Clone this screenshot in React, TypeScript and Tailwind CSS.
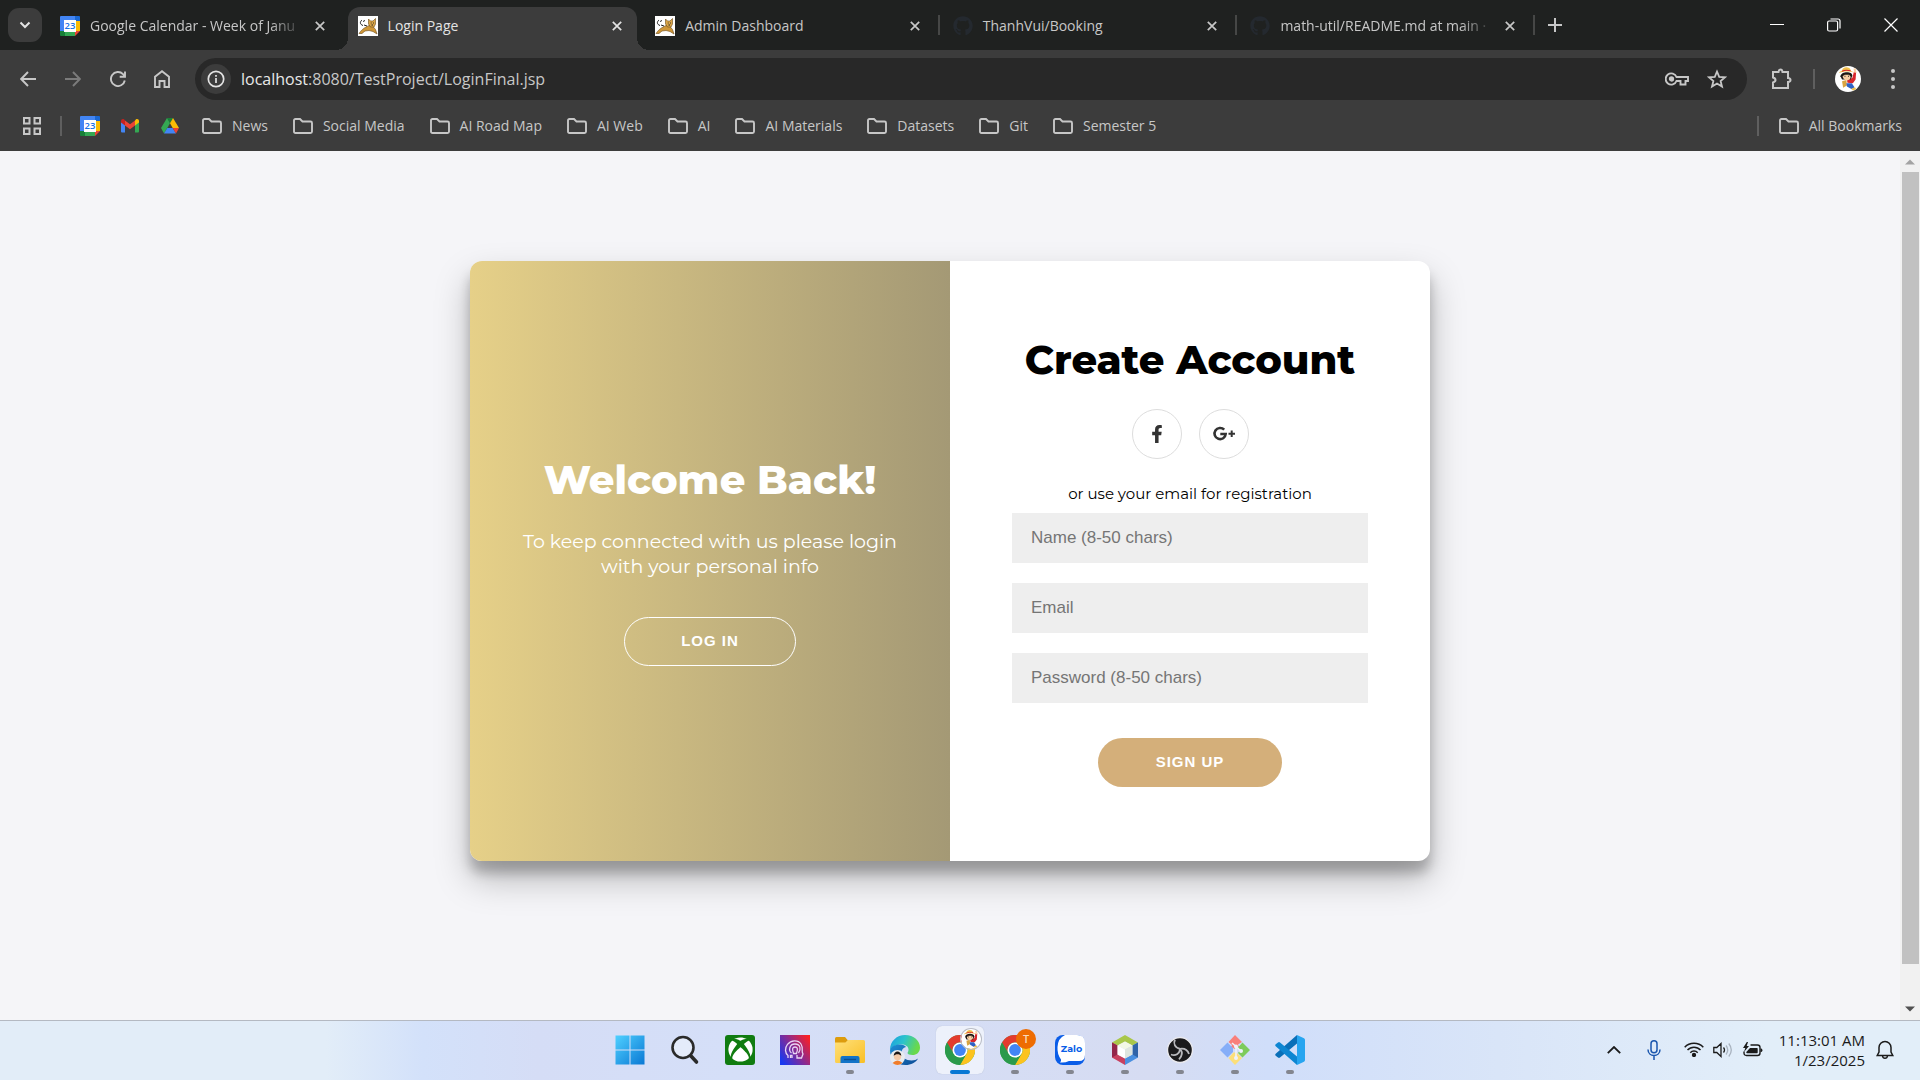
import React from 'react';
import { FaFacebookF, FaGithub, FaXbox } from 'react-icons/fa';

const ui = "font-['Segoe_UI','Open_Sans',sans-serif]";
const brand = "font-['Montserrat','Inter',sans-serif]";

function CalendarIcon() {
  return (
    <svg viewBox="0 0 20 20" className="size-5 shrink-0">
      <path d="M0 1a1 1 0 0 1 1-1h14v5H5v10H0z" fill="#4285f4" />
      <path d="M15 0h4a1 1 0 0 1 1 1v4h-5z" fill="#1967d2" />
      <path d="M15 5h5v10h-5z" fill="#fbbc04" />
      <path d="M5 15h10v5H5z" fill="#34a853" />
      <path d="M0 15h5v5H1a1 1 0 0 1-1-1z" fill="#188038" />
      <path d="M15 15h5l-5 5z" fill="#ea4335" />
      <path d="M4 4h12v12H4z" fill="#fff" />
      <text x="10" y="13.4" fontSize="9.5" fontWeight="600" textAnchor="middle" fill="#1a73e8" fontFamily="Open Sans">23</text>
    </svg>
  );
}

function TomcatIcon() {
  return (
    <svg viewBox="0 0 20 20" className="size-5 shrink-0">
      <path d="M0 0h20v20H0z" fill="#fff" />
      <path d="M1 17.500c2-3 4-5 8-7l2-1 4 1 2.500 3 1.500 4.500-4-2.500-4-1-4 .5-3 2.500z" fill="#cf9738" stroke="#6b4a18" strokeWidth=".6" />
      <path d="M10.500 3l2 2h2.500l2.500-2.500v5.500l-1.500 3h-3.500l-2-3z" fill="#d9a548" stroke="#6b4a18" strokeWidth=".6" />
      <path d="M4 4C1.500 6 2 8.500 5 9.500M5 5.500l2-1M6 9l3 1M12.800 7h.8M15.200 7h.8M13.500 9h1.500" fill="none" stroke="#222" strokeWidth="1" />
    </svg>
  );
}

function GmailIcon() {
  return (
    <svg viewBox="0 0 20 20" className="size-5 shrink-0">
      <path d="M1 5v10.500a1 1 0 0 0 1 1h3V8z" fill="#4285f4" />
      <path d="M19 5v10.500a1 1 0 0 1-1 1h-3V8z" fill="#34a853" />
      <path d="M15 4.500v5l4-3V5c0-1.900-2-2.500-3.200-1.500z" fill="#fbbc04" />
      <path d="M5 4.500l5 3.700 5-3.700v5l-5 3.700-5-3.700z" fill="#ea4335" />
      <path d="M1 5v1.500l4 3v-5l-.8-1C3 2.500 1 3.100 1 5z" fill="#c5221f" />
    </svg>
  );
}

function DriveIcon() {
  return (
    <svg viewBox="0 0 20 20" className="size-5 shrink-0">
      <path d="M7 2h6l-3 5.200z" fill="#188038" />
      <path d="M13 2l6 10h-6.300L10 7.200z" fill="#fbbc04" />
      <path d="M7 2l3 5.200-2.700 4.800L4 17.500 1 12z" fill="#34a853" />
      <path d="M7.300 12H12.700L16 17.500H4z" fill="#4285f4" />
      <path d="M12.700 12H19l-3 5.500z" fill="#ea4335" />
    </svg>
  );
}

function FolderIcon() {
  return (
    <svg viewBox="0 0 20 16" className="h-4 w-5 shrink-0" fill="none" stroke="#c7c7c7" strokeWidth="1.9">
      <path d="M1 13V2.500Q1 1 2.500 1H7l2.500 2.500h8Q19 3.500 19 5v8.500q0 1.500-1.500 1.500h-15Q1 15 1 13.500z" />
    </svg>
  );
}

function CloseIcon({ className }: { className: string }) {
  return (
    <svg viewBox="0 0 10 10" className={className} stroke="currentColor" strokeWidth="1.7">
      <path d="M.8.8l8.400 8.400M9.200.8L.8 9.200" />
    </svg>
  );
}

function Avatar({ className }: { className: string }) {
  return (
    <svg viewBox="0 0 24 24" className={className}>
      <circle cx="12" cy="12" r="12" fill="#fff" />
      <path d="M11 12.500l5-1.500 1.500-6 2 .5-.5 7-2.500 3.500-5-.5z" fill="#d8262c" />
      <path d="M17 2.500l2-.5.8 4-1.800.5z" fill="#f8cfa4" />
      <path d="M6.500 14l4-1 .5 5-3.500 2z" fill="#d9a441" />
      <path d="M10.500 16l5 0 2.500 3.500-2.500 2-4.500-2.500z" fill="#2f62c4" />
      <path d="M15 21l3.500-1.500 1 2-3 1z" fill="#eec04f" />
      <path d="M5 9.500C5 5 16 4 16 9l-1.500 3.500h-8z" fill="#1d1815" />
      <path d="M7 9.500l2-1.500 4 0 1.500 2c0 4.500-7 4.500-7.500-.5z" fill="#f8cfa4" />
      <path d="M8.800 9.500h.8M12 9.500h.8" stroke="#111" strokeWidth="1" />
      <path d="M3.500 6.500C5 3 15 2.500 17 6c-3-1.500-10-1.200-13.500.5z" fill="#f1c24c" />
      <path d="M6.500 4.500c0-4.500 7.500-4.500 8-.5z" fill="#f1c24c" />
      <path d="M6.500 4.800c2-1 5.500-1 8-.4" stroke="#d8262c" strokeWidth="1" fill="none" />
    </svg>
  );
}

const tabs = [
  { title: 'Google Calendar - Week of Janu', icon: <CalendarIcon />, active: false, divider: false, faded: true },
  { title: 'Login Page', icon: <TomcatIcon />, active: true, divider: false, faded: false },
  { title: 'Admin Dashboard', icon: <TomcatIcon />, active: false, divider: true, faded: false },
  { title: 'ThanhVui/Booking', icon: <FaGithub className="size-5 shrink-0 text-[#24292f]" />, active: false, divider: true, faded: false },
  { title: 'math-util/README.md at main ·', icon: <FaGithub className="size-5 shrink-0 text-[#24292f]" />, active: false, divider: true, faded: true },
];

function TabStrip() {
  return (
    <div className="flex h-[50px] items-center bg-[#1f2120] pl-2 pr-px text-[#c7c7c7]">
      <button aria-label="Search tabs" className="flex h-[34px] w-[34px] shrink-0 items-center justify-center rounded-[11px] bg-[#3c3c3c]">
        <svg viewBox="0 0 12 8" className="h-2 w-3" fill="none" stroke="#e3e3e3" strokeWidth="2"><path d="M1.500 1.500L6 6l4.500-4.500" /></svg>
      </button>
      <div className="ml-2 grid h-full min-w-0 max-w-[1488px] flex-1 grid-cols-5 items-end" role="tablist">
        {tabs.map((t) => (
          <div
            key={t.title}
            className={
              t.active
                ? 'relative mr-2 flex h-[43px] min-w-0 items-center rounded-t-xl bg-[#3c3c3c] pb-1.5 pl-2.5 pr-[14px] text-[#e3e3e3]'
                : 'relative flex h-[43px] min-w-0 items-center pb-1.5 pl-2.5 pr-[22px]'
            }
          >
            {t.active && (
              <>
                <span className="absolute -left-3 bottom-0 size-3 bg-[radial-gradient(circle_at_0_0,#1f2120_12px,#3c3c3c_12px)]" />
                <span className="absolute -right-3 bottom-0 size-3 bg-[radial-gradient(circle_at_100%_0,#1f2120_12px,#3c3c3c_12px)]" />
              </>
            )}
            <button role="tab" aria-selected={t.active} className="flex min-w-0 flex-1 items-center gap-2.5 text-left">
              {t.icon}
              <span className={t.faded ? 'flex-1 whitespace-nowrap text-[14px] leading-5 [mask-image:linear-gradient(to_right,#000_84%,transparent)]' : 'flex-1 whitespace-nowrap text-[14px] leading-5'}>{t.title}</span>
            </button>
            <button aria-label="Close tab" className="ml-2.5 flex size-3 shrink-0 items-center justify-center"><CloseIcon className="size-[10px]" /></button>
            {t.divider && <span className="absolute right-[3px] top-2 h-5 w-0.5 bg-[#464746]" />}
          </div>
        ))}
      </div>
      <button aria-label="New tab" className="ml-2.5 shrink-0">
        <svg viewBox="0 0 14 14" className="size-3.5" stroke="currentColor" strokeWidth="2"><path d="M7 0v14M0 7h14" /></svg>
      </button>
      <div className="ml-auto flex shrink-0 text-white">
        <button aria-label="Minimize" className="flex w-[57px] items-center justify-center"><svg viewBox="0 0 14 14" className="size-3.5" stroke="currentColor"><path d="M0 6.500h14" /></svg></button>
        <button aria-label="Restore" className="flex w-[57px] items-center justify-center"><svg viewBox="0 0 14 14" className="size-3.5" fill="none" stroke="currentColor" strokeWidth="1.200"><rect x=".6" y="3" width="10" height="10" rx="1.500" /><path d="M3.500 1H11q2 0 2 2v7.500" /></svg></button>
        <button aria-label="Close" className="flex w-[57px] items-center justify-center"><svg viewBox="0 0 14 14" className="size-3.5" stroke="currentColor" strokeWidth="1.200"><path d="M.5.500l13 13M13.500.5l-13 13" /></svg></button>
      </div>
    </div>
  );
}

function Toolbar() {
  return (
    <div className="flex h-[58px] items-center bg-[#3c3c3c] pl-5 pr-[25px] text-[#c7c7c7]">
      <button aria-label="Back" className="w-[45px]">
        <svg viewBox="0 0 16 16" className="size-4" fill="none" stroke="currentColor" strokeWidth="1.900"><path d="M16 8H1.500M8 1L1.200 8 8 15" /></svg>
      </button>
      <button aria-label="Forward" className="w-[45px]">
        <svg viewBox="0 0 16 16" className="size-4" fill="none" stroke="#7b7b7b" strokeWidth="1.900"><path d="M0 8h14.500M8 1l6.800 7L8 15" /></svg>
      </button>
      <button aria-label="Reload" className="w-[44px]">
        <svg viewBox="0 0 16 16" className="size-4" fill="none" stroke="currentColor" strokeWidth="1.900"><path d="M14.800 9.500A7 7 0 1 1 13 3.200L15 5.500M15 .5v5.300H9.700" /></svg>
      </button>
      <button aria-label="Home" className="w-[41px]">
        <svg viewBox="0 0 16 18" className="h-[18px] w-4" fill="none" stroke="currentColor" strokeWidth="1.900"><path d="M1 17V6.800L8 1.200l7 5.600V17h-4.500v-6h-5v6z" /></svg>
      </button>
      <div className="flex h-[42px] min-w-0 flex-1 items-center rounded-full bg-[#282828] pl-1.5 pr-5">
        <button aria-label="Site information" className="flex size-[30px] shrink-0 items-center justify-center rounded-full bg-[#3c3c3c]">
          <svg viewBox="0 0 18 18" className="size-[18px]" fill="none" stroke="#e3e3e3" strokeWidth="1.700"><circle cx="9" cy="9" r="7.700" /><path d="M9 8v5M9 5v1.700" /></svg>
        </button>
        <a href="#address" className="ml-2.5 flex-1 whitespace-nowrap text-[16px] leading-6"><span className="text-[#e8e8e8]">localhost</span>:8080/TestProject/LoginFinal.jsp</a>
        <button aria-label="Passwords">
          <svg viewBox="0 0 24 14" className="h-3.5 w-6" fill="none" stroke="currentColor" strokeWidth="1.900"><path d="M11.500 5A5.600 5.600 0 1 0 11.500 9h4v3.500h5V9H23V5z" /><circle cx="6.500" cy="7" r="1.700" fill="currentColor" /></svg>
        </button>
        <button aria-label="Bookmark this tab" className="ml-[18px]">
          <svg viewBox="0 0 20 20" className="size-5" fill="none" stroke="currentColor" strokeWidth="1.800"><path d="M10 2.500l2.200 5.300 5.800.5-4.400 3.700 1.400 5.600-5-3-5 3L6.400 12 2 8.300l5.800-.5z" /></svg>
        </button>
      </div>
      <button aria-label="Extensions" className="ml-6">
        <svg viewBox="0 0 22 22" className="size-[22px]" fill="none" stroke="currentColor" strokeWidth="2"><path d="M2 4h5.500q.3-2.500 2-2.500T11.500 4H17v6q2.500.3 2.500 2T17 14v6H2v-5.500q2.500-.8 2.500-2.500T2 9.500z" /></svg>
      </button>
      <span className="ml-5 h-5 w-0.5 bg-[#5f5f5f]" />
      <button aria-label="Profile" className="ml-5"><Avatar className="size-[26px]" /></button>
      <button aria-label="Menu" className="ml-[30px] flex flex-col gap-1">
        <span className="size-1 rounded-full bg-[#c7c7c7]" /><span className="size-1 rounded-full bg-[#c7c7c7]" /><span className="size-1 rounded-full bg-[#c7c7c7]" />
      </button>
    </div>
  );
}

const bookmarks = ['News', 'Social Media', 'AI Road Map', 'AI Web', 'AI', 'AI Materials', 'Datasets', 'Git', 'Semester 5'];

function BookmarkBar() {
  return (
    <nav className="flex h-[43px] items-start bg-[#3c3c3c] pl-[22px] pr-[18px] pt-2 text-[#c7c7c7]">
      <div className="flex h-5 w-full items-center">
        <button aria-label="Apps">
          <svg viewBox="0 0 20 20" className="size-5" fill="none" stroke="currentColor" strokeWidth="2"><path d="M2 2h5.500v5.500H2zM12.500 2H18v5.500h-5.500zM2 12.500h5.500V18H2zM12.500 12.500H18V18h-5.500z" /></svg>
        </button>
        <span className="ml-[18px] h-5 w-0.5 bg-[#5f5f5f]" />
        <div className="ml-[18px] flex gap-5">
          <a href="#calendar" aria-label="Calendar"><CalendarIcon /></a>
          <a href="#gmail" aria-label="Gmail"><GmailIcon /></a>
          <a href="#drive" aria-label="Drive"><DriveIcon /></a>
        </div>
        <div className="ml-[22px] flex gap-[25px]">
          {bookmarks.map((b) => (
            <a key={b} href="#folder" className="flex items-center gap-2.5 whitespace-nowrap text-[14px] leading-5"><FolderIcon />{b}</a>
          ))}
        </div>
        <span className="ml-auto h-5 w-0.5 bg-[#5f5f5f]" />
        <a href="#all" className="ml-5 flex items-center gap-2.5 whitespace-nowrap text-[14px] leading-5"><FolderIcon />All Bookmarks</a>
      </div>
    </nav>
  );
}

const fields = [
  { id: 'name', type: 'text', label: 'Name (8-50 chars)' },
  { id: 'email', type: 'email', label: 'Email' },
  { id: 'password', type: 'password', label: 'Password (8-50 chars)' },
];

function LoginCard() {
  return (
    <div className="grid min-h-[600px] w-full max-w-[960px] grid-cols-2 overflow-hidden rounded-xl bg-white shadow-[0_18px_35px_rgba(0,0,0,0.25),0_12px_12px_rgba(0,0,0,0.22)]">
      <section className="flex flex-col items-center justify-center bg-linear-to-r from-[#e6d088] to-[#a49975] px-[50px] text-center text-white">
        <h1 className={`${brand} text-[40px] font-extrabold leading-[50px] whitespace-nowrap`}>Welcome Back!</h1>
        <p className={`${brand} mt-6 text-[19px] leading-[25px]`}>To keep connected with us please login with your personal info</p>
        <button className="mb-px mt-[38px] h-[49px] rounded-full border border-white px-14 font-['Arial','Liberation_Sans',sans-serif] text-[15px] font-bold tracking-[1px]">LOG IN</button>
      </section>
      <form className="flex flex-col items-center justify-center px-[62px]" onSubmit={(e) => e.preventDefault()}>
        <h1 className={`${brand} text-[40px] font-extrabold leading-[50px] whitespace-nowrap text-black`}>Create Account</h1>
        <div className="mt-6 flex gap-[17px] text-[#333]">
          <a href="#facebook" aria-label="Facebook" className="flex size-[50px] items-center justify-center rounded-full border border-[#ddd]"><FaFacebookF className="size-[18px]" /></a>
          <a href="#google" aria-label="Google Plus" className="flex size-[50px] items-center justify-center rounded-full border border-[#ddd]">
            <svg viewBox="0 0 24 16" className="h-4 w-6" fill="none" stroke="currentColor" strokeWidth="2.600"><path d="M12.200 3.700A5.600 5.600 0 1 0 13.700 8H8.300" /><path d="M16.500 7.800h6.500M19.700 4.500v6.500" strokeWidth="2" /></svg>
          </a>
        </div>
        <span className={`${brand} mb-[9px] mt-[25px] text-[15px] leading-5 text-black`}>or use your email for registration</span>
        <div className="flex w-full flex-col gap-5">
          {fields.map((f) => (
            <input key={f.id} id={f.id} type={f.type} aria-label={f.label} placeholder={f.label} className="h-[50px] w-full bg-[#eee] px-[19px] font-['Arial','Liberation_Sans',sans-serif] text-[17px] text-black placeholder:text-[#757575]" />
          ))}
        </div>
        <button className="mt-[35px] h-[49px] rounded-full bg-[#d4af7a] px-[58px] font-['Arial','Liberation_Sans',sans-serif] text-[15px] font-bold tracking-[1px] text-white">SIGN UP</button>
      </form>
    </div>
  );
}

function ChromeIcon() {
  return (
    <svg viewBox="0 0 30 30" className="size-[30px]">
      <circle cx="15" cy="15" r="15" fill="#34a853" />
      <path d="M2 7.500A15 15 0 0 1 28 7.500H15A7.500 7.500 0 0 0 8.500 18.800z" fill="#e33b2e" />
      <path d="M28 7.500A15 15 0 0 1 15 30l6.500-11.200A7.500 7.500 0 0 0 15 7.500z" fill="#fcc31e" />
      <path d="M2 7.500A15 15 0 0 0 15 30l6.500-11.200A7.500 7.500 0 0 1 8.500 18.800z" fill="#2a9a4b" />
      <circle cx="15" cy="15" r="7.500" fill="#fff" />
      <circle cx="15" cy="15" r="5.900" fill="#4285f4" />
    </svg>
  );
}

const taskbarApps = [
  {
    name: 'Start', state: '',
    icon: (
      <svg viewBox="0 0 30 30" className="size-[30px]">
        <defs><linearGradient id="win" x1="0" y1="0" x2="1" y2="1"><stop stopColor="#4fd0ff" /><stop offset="1" stopColor="#0a78d4" /></linearGradient></defs>
        <path d="M.5.500h14v14H.500zM15.500.500h14v14h-14zM.5 15.500h14v14H.500zM15.500 15.500h14v14h-14z" fill="url(#win)" />
      </svg>
    ),
  },
  {
    name: 'Search', state: '',
    icon: (
      <svg viewBox="0 0 30 30" className="size-[30px]" fill="none" stroke="#2a2a2a" strokeLinecap="round"><circle cx="13" cy="12.500" r="10.500" strokeWidth="2.600" fill="#e4ebfa" /><path d="M21 21l5.500 6" strokeWidth="3.600" /></svg>
    ),
  },
  { name: 'Xbox', state: '', icon: <span className="flex size-[30px] items-center justify-center rounded-[3px] bg-[#107c10]"><FaXbox className="size-[25px] text-white" /></span> },
  {
    name: 'Predator', state: '',
    icon: (
      <svg viewBox="0 0 30 30" className="size-[30px]">
        <defs><linearGradient id="ps" x1="0" y1=".8" x2="1" y2=".1"><stop stopColor="#1838f0" /><stop offset=".5" stopColor="#8a2a90" /><stop offset="1" stopColor="#ff2020" /></linearGradient></defs>
        <path d="M0 0h30v30H0z" fill="url(#ps)" />
        <path d="M8 23V20.500C5 18 4.500 13 7.500 9.300 11 5 18 4.500 21 9c2 3 1.500 5.500 1.200 8l.8 2-1.500 4h-4.500v-3M10.500 23v-2.700h1.500v2.700M11.500 18c-3-2-2.500-9 3.500-9s6 6 3.500 9M13.500 18.500c-2-5.500-.5-6.500 1.500-6.500s3.500 1 1.500 6.500z" fill="none" stroke="#e9d5f5" strokeWidth="1.300" />
      </svg>
    ),
  },
  {
    name: 'File Explorer', state: 'open',
    icon: (
      <svg viewBox="0 0 30 30" className="size-[30px]">
        <defs><linearGradient id="fold" x1="0" y1="0" x2="1" y2="1"><stop stopColor="#ffe07a" /><stop offset="1" stopColor="#f9bf25" /></linearGradient></defs>
        <path d="M0 3.500Q0 2 1.500 2H10l3 3.500-3 3H0z" fill="#dd9c0d" />
        <path d="M0 7.500h10.500L13 5h15.500Q30 5 30 6.500v20q0 1.500-1.500 1.500h-27Q0 28 0 26.500z" fill="url(#fold)" />
        <path d="M5.500 28v-5q0-2 2-2h15q2 0 2 2v5z" fill="#1273c8" /><path d="M9 24.500h12" stroke="#0b4f92" strokeWidth="1.400" />
      </svg>
    ),
  },
  {
    name: 'Edge', state: '',
    icon: (
      <svg viewBox="0 0 30 30" className="size-[30px]">
        <defs>
          <linearGradient id="eg" x1="0" y1="0" x2="1" y2=".3"><stop stopColor="#1b9de2" /><stop offset=".5" stopColor="#2cc3cc" /><stop offset="1" stopColor="#6ad94b" /></linearGradient>
          <linearGradient id="eb" x1="0" y1="0" x2="1" y2="1"><stop stopColor="#1f8fd6" /><stop offset="1" stopColor="#0c4a94" /></linearGradient>
        </defs>
        <path d="M0 15C0 6 7 0 15 0c9 0 15 6 15 12.500 0 5-3.500 7.500-7.500 7.500-3 0-5-1-5-2 0-.8 1-1 1-3.500 0-3-3-5-7-5C6 9.500 1 12 0 15z" fill="url(#eg)" />
        <path d="M0 15c1-4 6-5.500 10-5.500 3 0 5 1.300 6 2.500-3 .5-4.500 3-4.500 5.500 0 5 4.500 8 10 8 3 0 5-1 6.500-2C26 27.500 21 30 15.500 30 6 30 0 23 0 15z" fill="url(#eb)" />
        <circle cx="7.500" cy="22.500" r="7.500" fill="#e8ecef" />
        <path d="M2.500 28q5-5 10 0-5 4-10 0z" fill="#f07c2a" /><circle cx="7.500" cy="21.500" r="3.700" fill="#f3c9a6" /><path d="M3.700 21c0-6 7.600-6 7.600 0-1.500-2.500-6-2.500-7.600 0z" fill="#1c1715" />
      </svg>
    ),
  },
  { name: 'Chrome', state: 'active', icon: <><ChromeIcon /><Avatar className="absolute right-[3px] top-[3px] size-5 rounded-full ring-1 ring-[#b9bcc4]" /></> },
  {
    name: 'Chrome, second profile', state: 'open',
    icon: (
      <>
        <ChromeIcon />
        <span className="absolute right-[3px] top-[3px] flex size-5 items-center justify-center rounded-full bg-[#ee6c02] text-[11px] leading-none font-semibold text-[#f8d9bd]">T</span>
      </>
    ),
  },
  {
    name: 'Zalo', state: 'open',
    icon: (
      <svg viewBox="0 0 30 30" className="size-[30px]">
        <rect width="30" height="30" rx="8" fill="#0a5de8" />
        <path d="M10 0h12q8 0 8 8v12q0 6-6 6H14q-4 2-9 1.500 1.500-1.500 1-3Q2 19 2.500 12 3 3 10 0z" fill="#fff" />
        <text x="16.500" y="17" fontSize="9.500" fontWeight="700" textAnchor="middle" fill="#0a5de8" fontFamily="Montserrat, Inter">Zalo</text>
      </svg>
    ),
  },
  {
    name: 'NetBeans', state: 'open',
    icon: (
      <svg viewBox="0 0 30 30" className="size-[30px]">
        <path d="M15 0l13 7.500-5.500 3L15 6.500l-7.500 4L2 7.500z" fill="#a9c74a" />
        <path d="M2 7.500l5.500 3v9L15 23.500V30L2 22.500z" fill="#c8405f" /><path d="M2 7.500l5.500 3v9L2 22.500z" fill="#93264a" />
        <path d="M28 7.500l-5.500 3v9L15 23.500V30l13-7.500z" fill="#4a90e0" /><path d="M28 7.500l-5.500 3v9l5.500 3z" fill="#3064a8" />
        <path d="M15 6.500l7.500 4L15 14.500l-7.500-4z" fill="#f3f8e6" /><path d="M7.500 10.500l7.500 4v9l-7.500-4z" fill="#fff" /><path d="M22.500 10.500l-7.500 4v9l7.500-4z" fill="#dfe6df" />
      </svg>
    ),
  },
  {
    name: 'OBS Studio', state: 'open',
    icon: (
      <svg viewBox="0 0 30 30" className="size-[30px]">
        <circle cx="15" cy="15" r="12.500" fill="#1b1a1c" stroke="#e9e9ee" strokeWidth="1.400" />
        <path d="M10 4.500c-2 4 0 8.500 5.300 9.300 4-.5 7.200 1 8.700 5.200M15.300 14c-1 4.500-4.500 7.500-9.300 5.500M15.500 14.300c2 3 1.500 7-1.500 10" fill="none" stroke="#b9b9bd" strokeWidth="1.800" />
      </svg>
    ),
  },
  {
    name: 'Git', state: 'open',
    icon: (
      <svg viewBox="0 0 30 30" className="size-[30px]">
        <path d="M15 0l7 7-4 2.500 1 2.500-4 2-4-2 1-2L8.500 7z" fill="#f97f7a" /><path d="M0 15l7.500-7.500L13 13v4l-5.500 5.500z" fill="#86aef8" />
        <path d="M30 15l-7.500-7.500-4.500 5 2 2.500-2 3 4.500 4.500z" fill="#7dcb5a" /><path d="M15 30l7-7-5.500-5.500h-3L8.500 23z" fill="#fcdf7a" />
        <path d="M12 8l9 8M16 12v12" stroke="#eef2fb" strokeWidth="1.600" /><circle cx="16" cy="11.500" r="2" fill="#eef2fb" /><circle cx="21" cy="16" r="2" fill="#eef2fb" /><circle cx="16" cy="23" r="2" fill="#eef2fb" />
      </svg>
    ),
  },
  { name: 'Visual Studio Code', state: 'open', icon: (
      <svg viewBox="0 0 30 30" className="size-[30px]">
        <path d="M22 0v8.500L5 22.500q-1 .8-2 0L.7 20.700q-1-1 0-2z" fill="#0a6fb8" />
        <path d="M22 30v-8.500L5 7.500q-1-.8-2 0L.7 9.300q-1 1 0 2z" fill="#0e86d2" />
        <path d="M22 0l7 3.200q1 .5 1 1.700v20.200q0 1.200-1 1.700L22 30z" fill="#27a5f0" />
      </svg>
    ) },
];

function Taskbar() {
  return (
    <footer className="relative flex h-[60px] shrink-0 items-center justify-center border-t border-[#b4b9c2] bg-[linear-gradient(90deg,#e2edf8_0%,#e2edf8_17%,#d3e1fa_22%,#d5ddf6_28%,#d5dff8_38%,#d6dcf2_60%,#d0defa_66%,#d9e5f8_78%,#e2eef9_92%)] pb-0.5">
      <div className="flex gap-[7px]">
        {taskbarApps.map((a) => (
          <button key={a.name} aria-label={a.name} className={a.state === 'active' ? 'relative flex size-12 items-center justify-center rounded-md bg-[#edf1fb] shadow-[0_0_1px_#a9b2c8]' : 'relative flex size-12 items-center justify-center'}>
            {a.icon}
            {a.state === 'open' && <span className="absolute bottom-0 h-1 w-2 rounded-full bg-[#83868f]" />}
            {a.state === 'active' && <span className="absolute bottom-0 h-1 w-5 rounded-full bg-[#0878d4]" />}
          </button>
        ))}
      </div>
      <div className="absolute right-[26px] top-0 flex h-full items-center pb-0.5 text-[#1b1b1b]">
        <button aria-label="Show hidden icons"><svg viewBox="0 0 14 8" className="h-2 w-3.5" fill="none" stroke="currentColor" strokeWidth="1.800"><path d="M.8 7.200L7 1l6.200 6.200" /></svg></button>
        <button aria-label="Microphone" className="ml-[26px]"><svg viewBox="0 0 14 20" className="h-5 w-3.5" fill="none" stroke="#1a56ae" strokeWidth="1.500"><rect x="4" y=".8" width="6" height="12" rx="3" /><path d="M1 9.500c0 8 12 8 12 0M7 15.500V20" /></svg></button>
        <button aria-label="Network" className="ml-[23px]"><svg viewBox="0 0 20 15" className="h-[15px] w-5" fill="none" stroke="currentColor" strokeWidth="1.500"><path d="M.7 5.200c5-5.300 13.600-5.300 18.600 0M3.500 8c3.500-3.800 9.500-3.800 13 0M6.300 10.700c2-2.200 5.400-2.200 7.400 0" /><circle cx="10" cy="13" r="1.400" fill="currentColor" /></svg></button>
        <button aria-label="Volume" className="ml-[9px]"><svg viewBox="0 0 20 16" className="h-4 w-5" fill="none" stroke="currentColor" strokeWidth="1.300"><path d="M.8 5.500h3L8 1.500v13l-4.200-4h-3zM10.500 5.500q2 2.500 0 5" /><path d="M13 3.500q3.500 4.500 0 9M15.800 1.500q5 6.500 0 13" stroke="#a9b3bf" /></svg></button>
        <button aria-label="Battery" className="ml-[10px]"><svg viewBox="0 0 20 16" className="h-4 w-5" fill="none" stroke="currentColor" strokeWidth="1.400"><path d="M7.500 3h7q2.500 0 2.500 2.500v5.500q0 2.500-2.500 2.500H3.500Q1 13.500 1 11V9.500" /><path d="M7 6h7q.7 0 .7.700v3.800q0 .7-.7.700H4q-.7 0-.7-.7V10z" fill="currentColor" stroke="none" /><path d="M17.500 6.500h.7q1.200 0 1.200 1.700t-1.200 1.700h-.7z" fill="currentColor" stroke="none" /><path d="M3.800 0L0 6h2.300L1 10l5-6H3.700L5 0z" fill="currentColor" stroke="none" /></svg></button>
        <time className="ml-4 block text-right text-[15px] leading-5 whitespace-nowrap">11:13:01 AM<br />1/23/2025</time>
        <button aria-label="Notifications" className="ml-[11px]"><svg viewBox="0 0 18 20" className="h-5 w-[18px]" fill="none" stroke="currentColor" strokeWidth="1.500"><path d="M1.200 15.500L3 12V7.500a6 6 0 0 1 12 0V12l1.800 3.500zM6.500 16c.5 3 4.500 3 5 0" /></svg></button>
      </div>
    </footer>
  );
}

export default function App() {
  return (
    <div className={`${ui} flex min-h-screen flex-col bg-[#f5f5f8]`}>
      <header>
        <TabStrip />
        <Toolbar />
        <BookmarkBar />
      </header>
      <div className="flex flex-1">
        <main className="flex flex-1 items-start justify-center pt-[110px]"><LoginCard /></main>
        <aside aria-label="Scrollbar" className="flex w-5 flex-col items-center bg-[#f1f1f1]">
          <svg viewBox="0 0 10 6" className="mb-[7px] mt-2 h-1.5 w-2.5" fill="#a3a3a3"><path d="M0 5.500L5 .5l5 5z" /></svg>
          <div className="w-[17px] flex-1 bg-[#c1c1c1]" />
          <div className="h-[42px]" />
          <svg viewBox="0 0 10 6" className="mb-2 h-1.5 w-2.5" fill="#505050"><path d="M0 .5l5 5 5-5z" /></svg>
        </aside>
      </div>
      <Taskbar />
    </div>
  );
}
